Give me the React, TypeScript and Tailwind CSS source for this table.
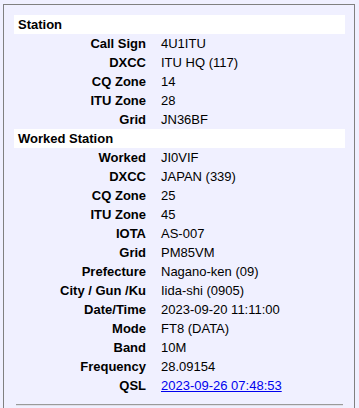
const stationRows: [string, string][] = [
  ["Call Sign", "4U1ITU"],
  ["DXCC", "ITU HQ (117)"],
  ["CQ Zone", "14"],
  ["ITU Zone", "28"],
  ["Grid", "JN36BF"],
];

const workedRows: [string, string][] = [
  ["Worked", "JI0VIF"],
  ["DXCC", "JAPAN (339)"],
  ["CQ Zone", "25"],
  ["ITU Zone", "45"],
  ["IOTA", "AS-007"],
  ["Grid", "PM85VM"],
  ["Prefecture", "Nagano-ken (09)"],
  ["City / Gun /Ku", "Iida-shi (0905)"],
  ["Date/Time", "2023-09-20 11:11:00"],
  ["Mode", "FT8 (DATA)"],
  ["Band", "10M"],
  ["Frequency", "28.09154"],
];

const Row = ({ label, children }: { label: string; children: React.ReactNode }) => (
  <div className="flex h-[19px] items-center leading-[19px]">
    <div className="w-[132px] shrink-0 text-right font-bold">{label}</div>
    <div className="pl-[15px]">{children}</div>
  </div>
);

const Header = ({ title }: { title: string }) => (
  <div className="h-[19px] bg-white pl-[4px] font-bold leading-[19px]">{title}</div>
);

export default function App() {
  return (
    <div className="min-h-[408px] overflow-hidden bg-[#f0f0ff] pl-[3px] pt-[4px] font-['Liberation_Sans',Arial,sans-serif] text-[13px] text-black">
      <div className="h-[420px] w-[352px] border border-[#808080] pl-[10px] pr-[9px] pt-[10px]">
        <Header title="Station" />
        {stationRows.map(([l, v]) => (
          <Row key={l} label={l}>
            {v}
          </Row>
        ))}
        <Header title="Worked Station" />
        {workedRows.map(([l, v]) => (
          <Row key={l} label={l}>
            {v}
          </Row>
        ))}
        <Row label="QSL">
          <a href="#" className="text-[#0000ee] underline">
            2023-09-26 07:48:53
          </a>
        </Row>
        <div className="mx-[2px] mt-[9px] border-t border-b border-t-[#9a9a9a] border-b-[#e0e0e8]" />
      </div>
    </div>
  );
}
